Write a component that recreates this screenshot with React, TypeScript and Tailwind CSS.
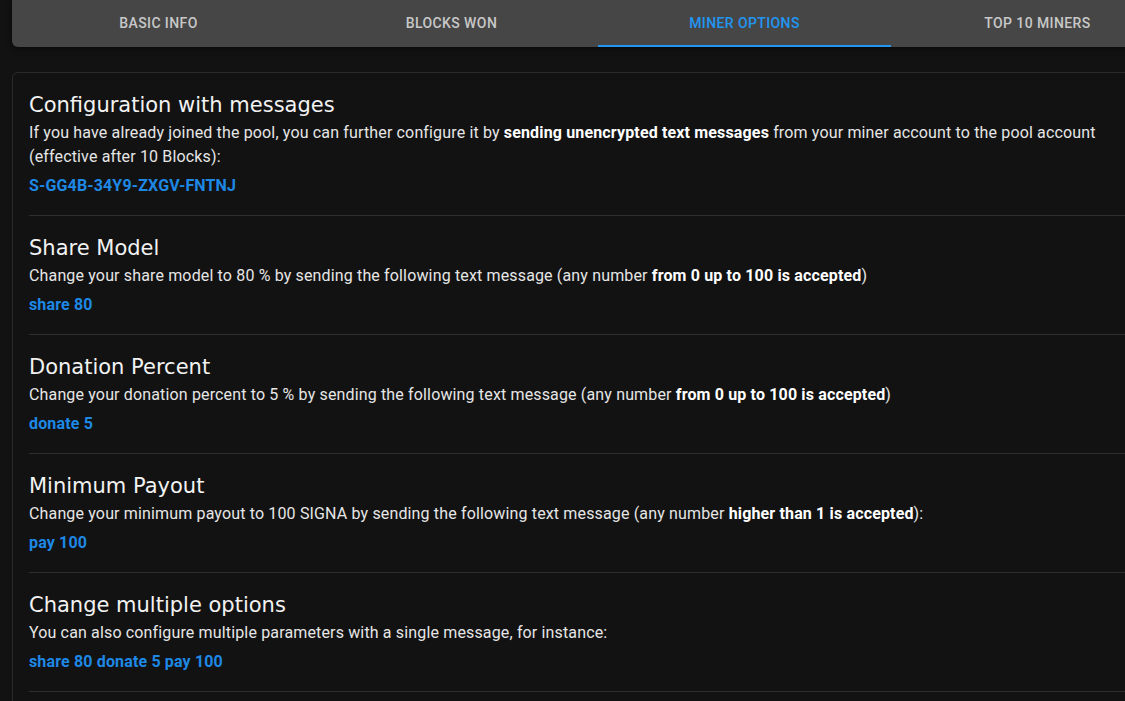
import type { ReactNode } from "react";

const tabs = ["Basic Info", "Blocks Won", "Miner Options", "Top 10 Miners"];

type Section = {
  title: string;
  body: ReactNode;
  code: string;
};

const sections: Section[] = [
  {
    title: "Configuration with messages",
    body: (
      <>
        If you have already joined the pool, you can further configure it by{" "}
        <b className="font-bold text-white">sending unencrypted text messages</b> from your miner
        account to the pool account (effective after 10 Blocks):
      </>
    ),
    code: "S-GG4B-34Y9-ZXGV-FNTNJ",
  },
  {
    title: "Share Model",
    body: (
      <>
        Change your share model to 80 % by sending the following text message (any number{" "}
        <b className="font-bold text-white">from 0 up to 100 is accepted</b>)
      </>
    ),
    code: "share 80",
  },
  {
    title: "Donation Percent",
    body: (
      <>
        Change your donation percent to 5 % by sending the following text message (any number{" "}
        <b className="font-bold text-white">from 0 up to 100 is accepted</b>)
      </>
    ),
    code: "donate 5",
  },
  {
    title: "Minimum Payout",
    body: (
      <>
        Change your minimum payout to 100 SIGNA by sending the following text message (any number{" "}
        <b className="font-bold text-white">higher than 1 is accepted</b>):
      </>
    ),
    code: "pay 100",
  },
  {
    title: "Change multiple options",
    body: <>You can also configure multiple parameters with a single message, for instance:</>,
    code: "share 80 donate 5 pay 100",
  },
];

export default function App() {
  return (
    <div className="h-[701px] w-[1125px] overflow-hidden bg-[#121212] font-['Roboto',sans-serif]">
      <div className="ml-[12px] flex h-[47px] w-[1172px] rounded-b-md bg-[#464646] shadow-[0_2px_6px_rgba(0,0,0,0.5)]">
        {tabs.map((t, i) => (
          <div
            key={t}
            className={
              i === 2
                ? "flex w-[293px] items-center justify-center border-b-2 border-[#2196f3] pt-[2px] text-[14px] font-medium uppercase tracking-[0.4px] text-[#2196f3]"
                : "flex w-[293px] items-center justify-center border-b-2 border-transparent pt-[2px] text-[14px] font-medium uppercase tracking-[0.4px] text-[#c8c8c8]"
            }
          >
            {t}
          </div>
        ))}
      </div>

      <div className="ml-[12px] mt-[25px] min-h-[700px] w-[1160px] rounded-md border border-[#2a2a2a] px-[16px]">
        {sections.map((s) => (
          <div key={s.title} className="border-b border-[#2e2e2e] pb-[17px] pt-[18px]">
            <h2 className="mb-[2px] h-[28px] font-['DejaVu_Sans',sans-serif] text-[21px] leading-[28px] text-[#f2f2f2]">
              {s.title}
            </h2>
            <p className="text-[16px] leading-6 tracking-[0.15px] text-[#e6e6e6]">{s.body}</p>
            <div className="mt-[5px] text-[16px] font-bold leading-6 tracking-[0.15px] text-[#1e88e5]">
              {s.code}
            </div>
          </div>
        ))}
      </div>
    </div>
  );
}
